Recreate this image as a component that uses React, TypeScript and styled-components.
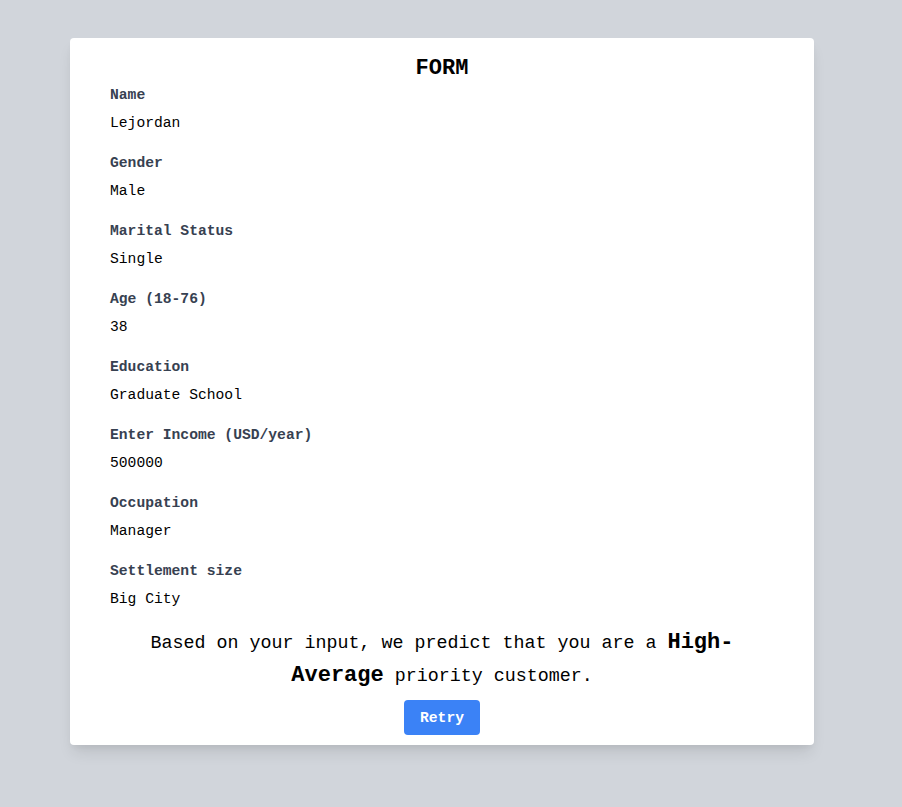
import styled, { createGlobalStyle } from "styled-components";

const fields = [
  { label: "Name", value: "Lejordan" },
  { label: "Gender", value: "Male" },
  { label: "Marital Status", value: "Single" },
  { label: "Age (18-76)", value: "38" },
  { label: "Education", value: "Graduate School" },
  { label: "Enter Income (USD/year)", value: "500000" },
  { label: "Occupation", value: "Manager" },
  { label: "Settlement size", value: "Big City" },
];

const GlobalStyle = createGlobalStyle`
  body {
    margin: 0;
    font-family: "Liberation Mono", "DejaVu Sans Mono", monospace;
    background: #d1d5db;
  }
`;

const App = () => {
  return (
    <Page>
      <GlobalStyle />
      <Card>
        <Title>FORM</Title>
        {fields.map((f) => (
          <Field key={f.label}>
            <Label>{f.label}</Label>
            <Value>{f.value}</Value>
          </Field>
        ))}
        <Prediction>
          Based on your input, we predict that you are a{" "}
          <Strong>High-Average</Strong> priority customer.
        </Prediction>
        <ButtonRow>
          <RetryButton type="button">Retry</RetryButton>
        </ButtonRow>
      </Card>
    </Page>
  );
};

const Page = styled.div`
  min-height: 100vh;
  box-sizing: border-box;
  padding: 38px 0 0 70px;
`;

const Card = styled.div`
  width: 744px;
  box-sizing: border-box;
  background: #fff;
  border-radius: 4px;
  padding: 16px 40px 10px;
  box-shadow: 0 10px 15px -3px rgba(0, 0, 0, 0.1),
    0 4px 6px -2px rgba(0, 0, 0, 0.05);
`;

const Title = styled.h1`
  margin: 0;
  font-size: 22px;
  line-height: 29px;
  font-weight: 700;
  text-align: center;
  color: #000;
`;

const Field = styled.div`
  display: flex;
  flex-direction: column;
  gap: 4px;
  margin-bottom: 16px;
`;

const Label = styled.label`
  font-size: 14.67px;
  line-height: 24px;
  font-weight: 700;
  color: #374151;
`;

const Value = styled.p`
  margin: 0;
  font-size: 14.67px;
  line-height: 24px;
  color: #000;
`;

const Prediction = styled.p`
  margin: 2px 0 0;
  font-size: 18.33px;
  line-height: 32px;
  text-align: center;
  color: #000;
`;

const Strong = styled.span`
  font-size: 22px;
  line-height: 32px;
  font-weight: 700;
`;

const ButtonRow = styled.div`
  display: flex;
  justify-content: center;
  margin-top: 7px;
`;

const RetryButton = styled.button`
  height: 35px;
  padding: 0 16px;
  border: none;
  border-radius: 4px;
  background: #3b82f6;
  color: #fff;
  font-family: inherit;
  font-size: 14.67px;
  font-weight: 700;
  cursor: pointer;
`;

export default App;
